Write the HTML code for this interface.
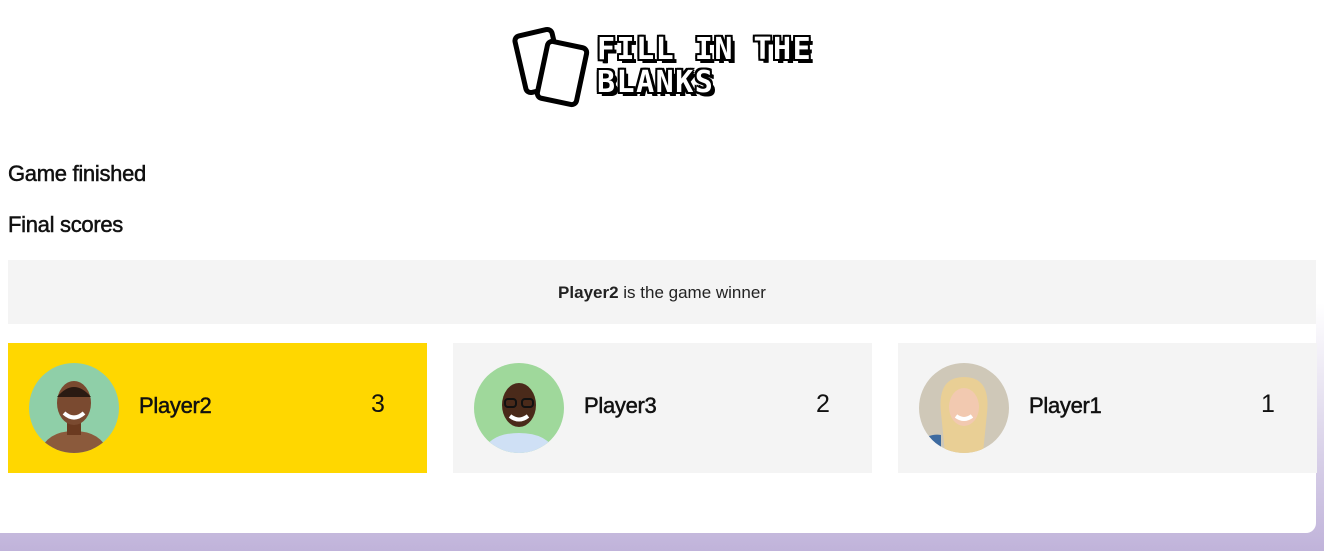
<!DOCTYPE html>
<html><head><style>
body{margin:0;width:1324px;height:551px;overflow:hidden;font-family:"Liberation Sans",sans-serif;background:linear-gradient(180deg,#fff 0%,#fff 55%,#c0b3da 100%);position:relative}
.card{position:absolute;left:0;top:0;width:1316px;height:533px;background:#fff;border-radius:0 0 10px 0}
.logo{position:absolute;left:597px;top:33px;font-family:"DejaVu Sans Mono",monospace;font-weight:bold;font-size:30px;line-height:33px;color:#fff;letter-spacing:1.5px;text-shadow:-2px 0 0 #000,2px 0 0 #000,0 -2px 0 #000,0 2px 0 #000,-2px -2px 0 #000,2px 2px 0 #000,-2px 2px 0 #000,2px -2px 0 #000,3px 4px 0 #000,4px 4px 0 #000}
h2{position:absolute;left:8px;margin:0;font-size:22px;font-weight:normal;color:#111;-webkit-text-stroke:.5px #111;letter-spacing:-.3px}
.banner{position:absolute;left:8px;top:260px;width:1308px;height:64px;background:#f4f4f4;text-align:center;line-height:66px;font-size:17px;color:#222}
.p{position:absolute;top:343px;width:419px;height:130px;background:#f4f4f4}
.p .av{position:absolute;left:21px;top:20px;width:90px;height:90px;border-radius:50%;overflow:hidden}
.p .n{position:absolute;left:131px;top:50px;font-size:22px;color:#111;-webkit-text-stroke:.5px #111;letter-spacing:-.3px}
.p .s{position:absolute;left:363px;top:47px;font-size:25px;color:#111}
</style></head><body>
<div class="card"></div>
<svg style="position:absolute;left:512px;top:26px" width="80" height="84" viewBox="0 0 80 84">
<g fill="#fff" stroke="#000" stroke-width="5" stroke-linejoin="round">
<rect x="8" y="6" width="38" height="58" rx="5" transform="rotate(-13 27 35)"/>
<rect x="30" y="18" width="40" height="58" rx="5" transform="rotate(12 50 47)"/>
</g></svg>
<div class="logo">FILL IN THE<br>BLANKS</div>
<h2 style="top:161px">Game finished</h2>
<h2 style="top:212px">Final scores</h2>
<div class="banner"><b>Player2</b> is the game winner</div>
<div class="p" style="left:8px;background:#ffd700"><div class="av"><svg width="90" height="90"><rect width="90" height="90" fill="#8fcfa8"/><path d="M10 90q8-22 35-22t35 22z" fill="#8b5a3c"/><rect x="38" y="58" width="14" height="14" fill="#6b3a20"/><ellipse cx="45" cy="40" rx="17" ry="22" fill="#7a4a30"/><path d="M28 34q17-20 34 0" fill="#2a1a12"/><path d="M35 50q10 9 20 0" stroke="#fff" stroke-width="4" fill="none"/></svg></div><div class="n">Player2</div><div class="s">3</div></div>
<div class="p" style="left:453px"><div class="av"><svg width="90" height="90"><rect width="90" height="90" fill="#9fd89b"/><path d="M8 90q8-20 37-20t37 20z" fill="#cfe0f5"/><ellipse cx="45" cy="42" rx="17" ry="22" fill="#4a2a1a"/><rect x="31" y="36" width="11" height="8" rx="3" fill="none" stroke="#111" stroke-width="2"/><rect x="48" y="36" width="11" height="8" rx="3" fill="none" stroke="#111" stroke-width="2"/><path d="M36 53q9 7 18 0" stroke="#fff" stroke-width="4" fill="none"/></svg></div><div class="n">Player3</div><div class="s">2</div></div>
<div class="p" style="left:898px"><div class="av"><svg width="90" height="90"><rect width="90" height="90" fill="#cfc8b8"/><path d="M22 50q-4-36 23-36t23 36l-4 40h-38z" fill="#e9cf95"/><ellipse cx="45" cy="44" rx="15" ry="19" fill="#f2c9b0"/><path d="M0 80q10-10 22-8v18h-22z" fill="#3d6aa0"/><path d="M37 53q8 6 16 0" stroke="#fff" stroke-width="4" fill="none"/></svg></div><div class="n">Player1</div><div class="s">1</div></div>
</body></html>
